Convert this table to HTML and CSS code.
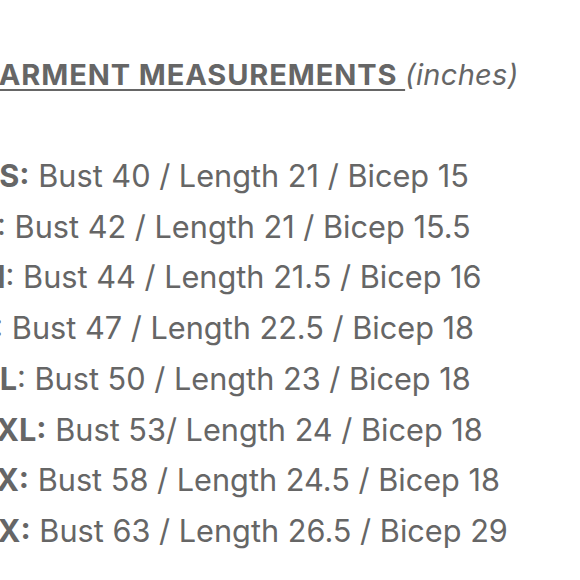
FILE: index.html
```html
<!DOCTYPE html>
<html>
<head>
<meta charset="utf-8">
<link rel="stylesheet" href="styles.css">
</head>
<body>
<div class="page">
  <h2 class="title"><span class="title-main">GARMENT MEASUREMENTS </span><em class="unit">(inches)</em></h2>
  <div class="sizes">
    <p class="row"><b>XS:</b> Bust 40 / Length 21 / Bicep 15</p>
    <p class="row"><b>S</b>: Bust 42 / Length 21 / Bicep 15.5</p>
    <p class="row"><b>M</b>: Bust 44 / Length 21.5 / Bicep 16</p>
    <p class="row"><b>L</b>: Bust 47 / Length 22.5 / Bicep 18</p>
    <p class="row"><b>XL</b>: Bust 50 / Length 23 / Bicep 18</p>
    <p class="row"><b>2XL:</b> Bust 53/ Length 24 / Bicep 18</p>
    <p class="row"><b>3X:</b> Bust 58 / Length 24.5 / Bicep 18</p>
    <p class="row"><b>4X:</b> Bust 63 / Length 26.5 / Bicep 29</p>
  </div>
</div>
</body>
</html>
```
FILE: styles.css
```css
html, body {
  margin: 0;
  padding: 0;
  background: #ffffff;
  overflow: hidden;
}
body {
  font-family: "Inter", "Open Sans", sans-serif;
  color: #666666;
}
.page {
  margin-left: -23px;
  text-align: left;
  white-space: nowrap;
}
.title {
  margin: 0;
  padding-top: 55px;
  font-size: 29px;
  line-height: 40px;
  font-weight: 700;
  letter-spacing: 0.9px;
}
.title-main {
  text-decoration: underline;
  text-underline-offset: 4px;
  text-decoration-thickness: 2px;
}
.unit {
  font-weight: 400;
  font-style: italic;
  font-size: 29px;
  letter-spacing: 0.3px;
}
.sizes {
  margin-top: 56px;
}
.row {
  margin: 0;
  font-size: 30.7px;
  line-height: 50.7px;
  font-variant-numeric: proportional-nums;
}
.row b {
  font-weight: 700;
}
```
